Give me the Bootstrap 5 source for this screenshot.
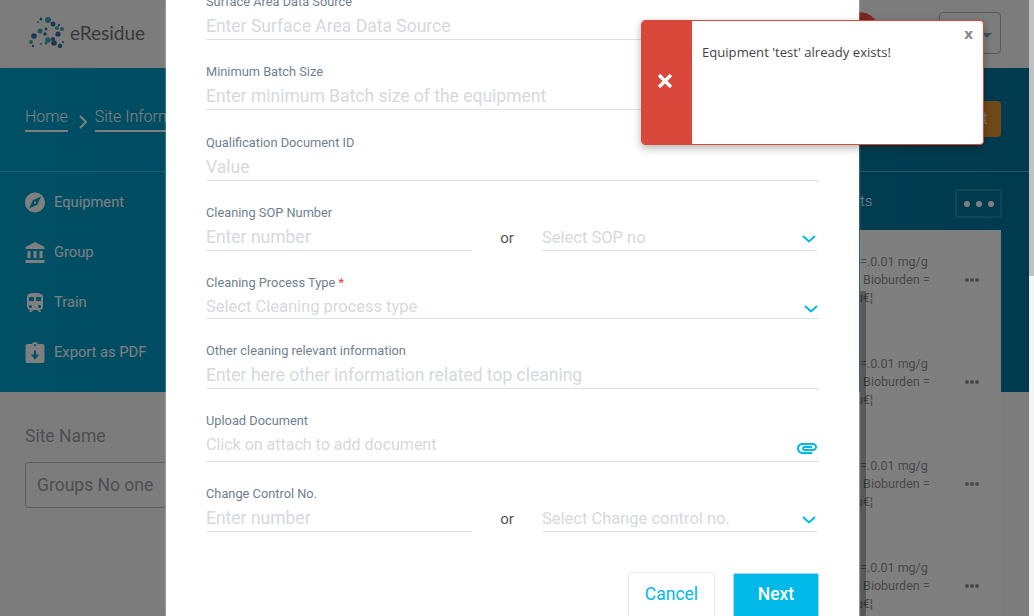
<!DOCTYPE html>
<html lang="en">
<head>
  <meta charset="UTF-8">
  <title>eResidue</title>
  <link href="https://cdn.jsdelivr.net/npm/bootstrap@5.3.0/dist/css/bootstrap.min.css" rel="stylesheet">
  <style>
    html, body { height: 616px; overflow: hidden; }
    body { font-family: Roboto, "Liberation Sans", sans-serif; background: #f8f8f8; }
    .app-shell { width: 1029px; height: 616px; overflow: hidden; }
    .top-strip { height: 68px; padding: 12px 28px 14px 29px; background: #f9f9f9; }
    .brand-name { font-family: Lato, sans-serif; font-size: 19px; color: #727272; margin-left: 3px; }
    .avatar-dot { width: 42px; height: 42px; border-radius: 50%; background: #ff4d3d; margin-left: auto; margin-right: 59px; }
    .lang-btn { width: 62px; height: 42px; border: 1px solid #a9b4bd; border-radius: 4px; padding: 4px 8px 0 0; }
    .lang-caret { width: 0; height: 0; border: 5px solid transparent; border-top-color: #6fa5c0; border-bottom: 0; }
    .hero-band { height: 324px; background: linear-gradient(90deg, #00a0cc, #00749c); color: #fff; }
    .crumb-row { height: 104px; padding: 37px 28px 0 25px; border-bottom: 1px solid rgba(255,255,255,.3); font-weight: 300; font-size: 16px; }
    .crumb-link { border-bottom: 2px solid #fff; padding-bottom: 1px; line-height: 24px; height: 27px; white-space: nowrap; }
    .crumb-sep { margin: 0 8px 0 11px; }
    .orange-btn { width: 120px; height: 36px; background: #e0922c; border-radius: 4px; margin-left: auto; margin-top: -4px; text-align: right; padding: 6px 13px; }
    .side-menu { padding: 5px 0 0 25px; }
    .side-item { height: 50px; gap: 9px; font-size: 14.7px; }
    .side-item svg { width: 20px; height: 21px; fill: #fff; }
    .tab-end { position: absolute; left: 860px; top: 190px; color: #fff; font-size: 15px; font-weight: 300; }
    .dots-btn { position: absolute; left: 955px; top: 189px; width: 47px; height: 29px; border: 2px solid rgba(255,255,255,.15); border-radius: 3px; gap: 6px; }
    .dots-btn i { width: 6px; height: 6px; border-radius: 50%; background: #fff; }
    .site-block { padding: 31px 0 0 25px; color: #9a9fa6; font-size: 17.5px; }
    .site-field { width: 300px; height: 46px; margin-top: 13px; padding: 0 11px; border: 1px solid #bbb; border-radius: 4px; line-height: 44px; }
    .result-panel { position: absolute; left: 860px; top: 230px; width: 141px; height: 386px; background: #fff; color: #8e9096; font-size: 12.5px; line-height: 18px; white-space: nowrap; overflow: hidden; }
    .result-row { position: relative; height: 102px; padding-top: 23px; }
    .result-row p { margin: 0; }
    .result-row p.cut-line { margin-left: -4px; }
    .row-dots { position: absolute; left: 105px; top: 48px; gap: 1px; }
    .row-dots i { width: 4px; height: 4px; border-radius: 50%; background: #90929a; }
    .panel-scroll { position: absolute; left: 860px; top: 291px; width: 6px; height: 325px; background: rgba(0,0,0,.3); }
    .page-scroll { position: absolute; top: 0; left: 1029px; width: 5px; height: 616px; background: #f5f5f5; }
    .page-scroll div { height: 276px; background: #c1c1c1; }
    .dim-layer { position: absolute; top: 0; left: 0; width: 1029px; height: 616px; background: rgba(0,0,0,.5); }
    .form-sheet { position: absolute; left: 166px; top: 0; width: 693px; height: 616px; background: #fff; overflow: hidden; padding: 0 40px; box-shadow: 0 0 2px rgba(255,255,255,.6); }
    .form-stack { margin-top: -8px; }
    .field-box { height: 70px; }
    .field-box.f71 { height: 71px; }
    .field-box.f68 { height: 68px; }
    .field-box.f73 { height: 73px; }
    .field-box label { display: block; font-size: 12.8px; line-height: 20px; color: #6f7f90; height: 20px; margin: 0; }
    .req-star { color: #f33; }
    .line-input { display: block; width: 100%; height: 28px; border: 0; border-bottom: 1px solid #dce1e5; border-radius: 0; padding: 0; font-size: 17.5px; color: #555; background-color: transparent; box-shadow: none; }
    .line-input::placeholder { color: #d5d9de; opacity: 1; }
    select.line-input { color: #d5d9de; padding: 3px 0 0; font-size: 16.5px; background-position: right 1px top 12px; background-size: 14px 8px; background-image: url("data:image/svg+xml,%3csvg xmlns='http://www.w3.org/2000/svg' viewBox='0 0 14 8'%3e%3cpath fill='none' stroke='%2300b9e8' stroke-width='2' d='M1 1l6 5.5L13 1'/%3e%3c/svg%3e"); }
    select.short-select { height: 26px; padding-top: 2px; }
    .upload-input { height: 31px; font-size: 16px; padding-bottom: 3px; }
    .clip-icon { position: absolute; right: 0; top: 5px; width: 24px; height: 24px; fill: #00b9e8; }
    .or-word { width: 70px; text-align: center; font-size: 15px; color: #555; padding-top: 4px; }
    .left-half { width: 266px; }
    .right-half { width: 275px; }
    .foot-btns { gap: 19px; margin-top: 19px; }
    .foot-btns .btn { width: 85px; height: 52px; font-size: 17.5px; border-radius: 2px; padding: 0 0 10px; }
    .foot-btns .btn-next { width: 86px; color: #fff; background: #00b9e8; border: 1px solid #9fdcf4; font-weight: 500; }
    .btn-cancel { color: #00b9e8; background: #fff; border: 0; box-shadow: 0 0 3px rgba(0,0,0,.22); }
    .alert-box { position: absolute; left: 641px; top: 20px; width: 343px; height: 125px; background: #fff; border: 1px solid #d9473a; border-radius: 4px; overflow: hidden; box-shadow: 0 3px 8px rgba(0,0,0,.3); font-family: "Open Sans", sans-serif; }
    .alert-side { width: 50px; padding: 0 4px 4px 0; background: #d9473a; }
    .alert-side svg { width: 16px; height: 16px; }
    .alert-text { padding: 22px 0 0 10px; font-size: 13.1px; line-height: 18px; color: #444; }
    .alert-close { position: absolute; right: 10px; top: 2px; font-size: 15px; font-weight: 700; color: #888; line-height: 20px; }
  </style>
</head>
<body class="position-relative">
  <div class="app-shell">
    <div class="top-strip d-flex align-items-center">
      <svg width="38" height="34" viewBox="0 0 38 34">
        <g fill="#3aa9b5">
          <circle cx="19" cy="4" r="3"/><circle cx="12" cy="3" r="1.5" fill="#3b6ea5"/><circle cx="9" cy="6" r="1"/>
          <circle cx="24" cy="8" r="2.5" fill="#3b6ea5"/><circle cx="30" cy="9" r="1.2" fill="#3b6ea5"/><circle cx="33" cy="13" r="2"/><circle cx="28" cy="12" r="2"/>
          <circle cx="11" cy="15" r="2.5"/><circle cx="17" cy="13" r="1.5" fill="#3b6ea5"/><circle cx="16" cy="18" r="1.8" fill="#3b6ea5"/><circle cx="29" cy="18" r="2.6" fill="#3b6ea5"/>
          <circle cx="5" cy="20" r="2.8" fill="#3b6ea5"/><circle cx="19" cy="24" r="2.8"/><circle cx="24" cy="23" r="2" fill="#3b6ea5"/><circle cx="25" cy="27" r="2.8" fill="#3b6ea5"/>
          <circle cx="2" cy="26" r="2"/><circle cx="4" cy="30" r="1.2" fill="#3b6ea5"/><circle cx="12" cy="28" r="1"/><circle cx="17" cy="27" r="1.5"/><circle cx="31" cy="30" r="2.2" fill="#3b6ea5"/><circle cx="34" cy="26" r="1.2"/>
        </g>
      </svg>
      <span class="brand-name">eResidue</span>
      <div class="avatar-dot"></div>
      <div class="lang-btn d-flex align-items-center justify-content-end"><span class="lang-caret"></span></div>
    </div>
    <div class="hero-band">
      <div class="crumb-row d-flex">
        <span class="crumb-link">Home</span>
        <svg class="crumb-sep mt-1" width="8" height="24" viewBox="0 0 8 24"><path d="M1 7l6 6-6 6" fill="none" stroke="#fff" stroke-width="2"/></svg>
        <span class="crumb-link">Site Information</span>
        <div class="orange-btn">t</div>
      </div>
      <div class="side-menu">
        <div class="side-item d-flex align-items-center">
          <svg viewBox="2 2 20 20"><path d="M12 10.9c-.61 0-1.1.49-1.1 1.1s.49 1.1 1.1 1.1c.61 0 1.1-.49 1.1-1.1s-.49-1.1-1.1-1.1zM12 2C6.48 2 2 6.48 2 12s4.48 10 10 10 10-4.48 10-10S17.52 2 12 2zm2.19 12.19L6 18l3.81-8.19L18 6l-3.81 8.19z"/></svg>
          <span>Equipment</span>
        </div>
        <div class="side-item d-flex align-items-center">
          <svg viewBox="2 1 19 21"><path d="M4 10v7h3v-7H4zm6 0v7h3v-7h-3zM2 22h19v-3H2v3zm14-12v7h3v-7h-3zm-4.5-9L2 6v2h19V6l-9.5-5z"/></svg>
          <span>Group</span>
        </div>
        <div class="side-item d-flex align-items-center">
          <svg viewBox="2 1 20 21"><path d="M12 2c-4 0-8 .5-8 4v9.5C4 17.43 5.57 19 7.5 19L6 20.5v.5h2.23l2-2H14l2 2h2v-.5L16.5 19c1.93 0 3.5-1.57 3.5-3.5V6c0-3.5-3.58-4-8-4zM7.5 17c-.83 0-1.5-.67-1.5-1.5S6.67 14 7.5 14s1.5.67 1.5 1.5S8.33 17 7.5 17zm3.5-7H6V6h5v4zm2 0V6h5v4h-5zm3.5 7c-.83 0-1.5-.67-1.5-1.5s.67-1.5 1.5-1.5 1.5.67 1.5 1.5-.67 1.5-1.5 1.5z"/></svg>
          <span>Train</span>
        </div>
        <div class="side-item d-flex align-items-center">
          <svg viewBox="3 1 18 20"><path fill-rule="evenodd" d="M19 3h-4.18C14.4 1.84 13.3 1 12 1c-1.3 0-2.4.84-2.82 2H5c-1.1 0-2 .9-2 2v14c0 1.1.9 2 2 2h14c1.1 0 2-.9 2-2V5c0-1.1-.9-2-2-2zm-7 0a1 1 0 1 1 0 2 1 1 0 0 1 0-2zM11 9h2v4h3l-4 5-4-5h3z"/></svg>
          <span>Export as PDF</span>
        </div>
      </div>
    </div>
    <div class="site-block">
      <div>Site Name</div>
      <div class="site-field">Groups No one</div>
    </div>
  </div>

  <span class="tab-end">ts</span>
  <div class="dots-btn d-flex align-items-center justify-content-center"><i></i><i></i><i></i></div>
  <div class="result-panel">
    <div class="result-row"><p>=.0.01 mg/g</p><p>&nbsp;Bioburden =</p><p class="cut-line">u€¦</p><div class="row-dots d-flex"><i></i><i></i><i></i></div></div>
    <div class="result-row"><p>=.0.01 mg/g</p><p>&nbsp;Bioburden =</p><p class="cut-line">u€¦</p><div class="row-dots d-flex"><i></i><i></i><i></i></div></div>
    <div class="result-row"><p>=.0.01 mg/g</p><p>&nbsp;Bioburden =</p><p class="cut-line">u€¦</p><div class="row-dots d-flex"><i></i><i></i><i></i></div></div>
    <div class="result-row"><p>=.0.01 mg/g</p><p>&nbsp;Bioburden =</p><p class="cut-line">u€¦</p><div class="row-dots d-flex"><i></i><i></i><i></i></div></div>
  </div>
  <div class="panel-scroll"></div>
  <div class="dim-layer"></div>
  <div class="page-scroll"><div></div></div>

  <div class="form-sheet">
    <form class="form-stack">
      <div class="field-box">
        <label>Surface Area Data Source</label>
        <input type="text" class="form-control line-input" placeholder="Enter Surface Area Data Source">
      </div>
      <div class="field-box f71">
        <label>Minimum Batch Size</label>
        <input type="text" class="form-control line-input" placeholder="Enter minimum Batch size of the equipment">
      </div>
      <div class="field-box">
        <label>Qualification Document ID</label>
        <input type="text" class="form-control line-input" placeholder="Value">
      </div>
      <div class="field-box">
        <label>Cleaning SOP Number</label>
        <div class="d-flex">
          <input type="text" class="form-control line-input left-half" placeholder="Enter number">
          <span class="or-word">or</span>
          <select class="form-select line-input right-half"><option>Select SOP no</option></select>
        </div>
      </div>
      <div class="field-box f68">
        <label>Cleaning Process Type <span class="req-star">*</span></label>
        <select class="form-select line-input short-select"><option>Select Cleaning process type</option></select>
      </div>
      <div class="field-box">
        <label>Other cleaning relevant information</label>
        <input type="text" class="form-control line-input" placeholder="Enter here other information related top cleaning">
      </div>
      <div class="field-box f73">
        <label>Upload Document</label>
        <div class="position-relative">
          <input type="text" class="form-control line-input upload-input" placeholder="Click on attach to add document">
          <svg class="clip-icon" viewBox="0 0 24 24"><path d="M2 12.5C2 9.46 4.46 7 7.5 7H18c2.21 0 4 1.79 4 4s-1.79 4-4 4H9.5C8.12 15 7 13.88 7 12.5S8.12 10 9.5 10H17v2H9.41c-.55 0-.55 1 0 1H18c1.1 0 2-.9 2-2s-.9-2-2-2H7.5C5.57 9 4 10.57 4 12.5S5.57 16 7.5 16H17v2H7.5C4.46 18 2 15.54 2 12.5z"/></svg>
        </div>
      </div>
      <div class="field-box">
        <label>Change Control No.</label>
        <div class="d-flex">
          <input type="text" class="form-control line-input left-half" placeholder="Enter number">
          <span class="or-word">or</span>
          <select class="form-select line-input right-half"><option>Select Change control no.</option></select>
        </div>
      </div>
      <div class="foot-btns d-flex justify-content-end">
        <button type="button" class="btn btn-cancel">Cancel</button>
        <button type="button" class="btn btn-next">Next</button>
      </div>
    </form>
  </div>

  <div class="alert-box d-flex">
    <div class="alert-side d-flex align-items-center justify-content-center">
      <svg viewBox="0 0 16 16"><path d="M2 2l12 12M14 2L2 14" stroke="#fff" stroke-width="3.4"/></svg>
    </div>
    <div class="alert-text">Equipment 'test' already exists!</div>
    <span class="alert-close">x</span>
  </div>
</body>
</html>
